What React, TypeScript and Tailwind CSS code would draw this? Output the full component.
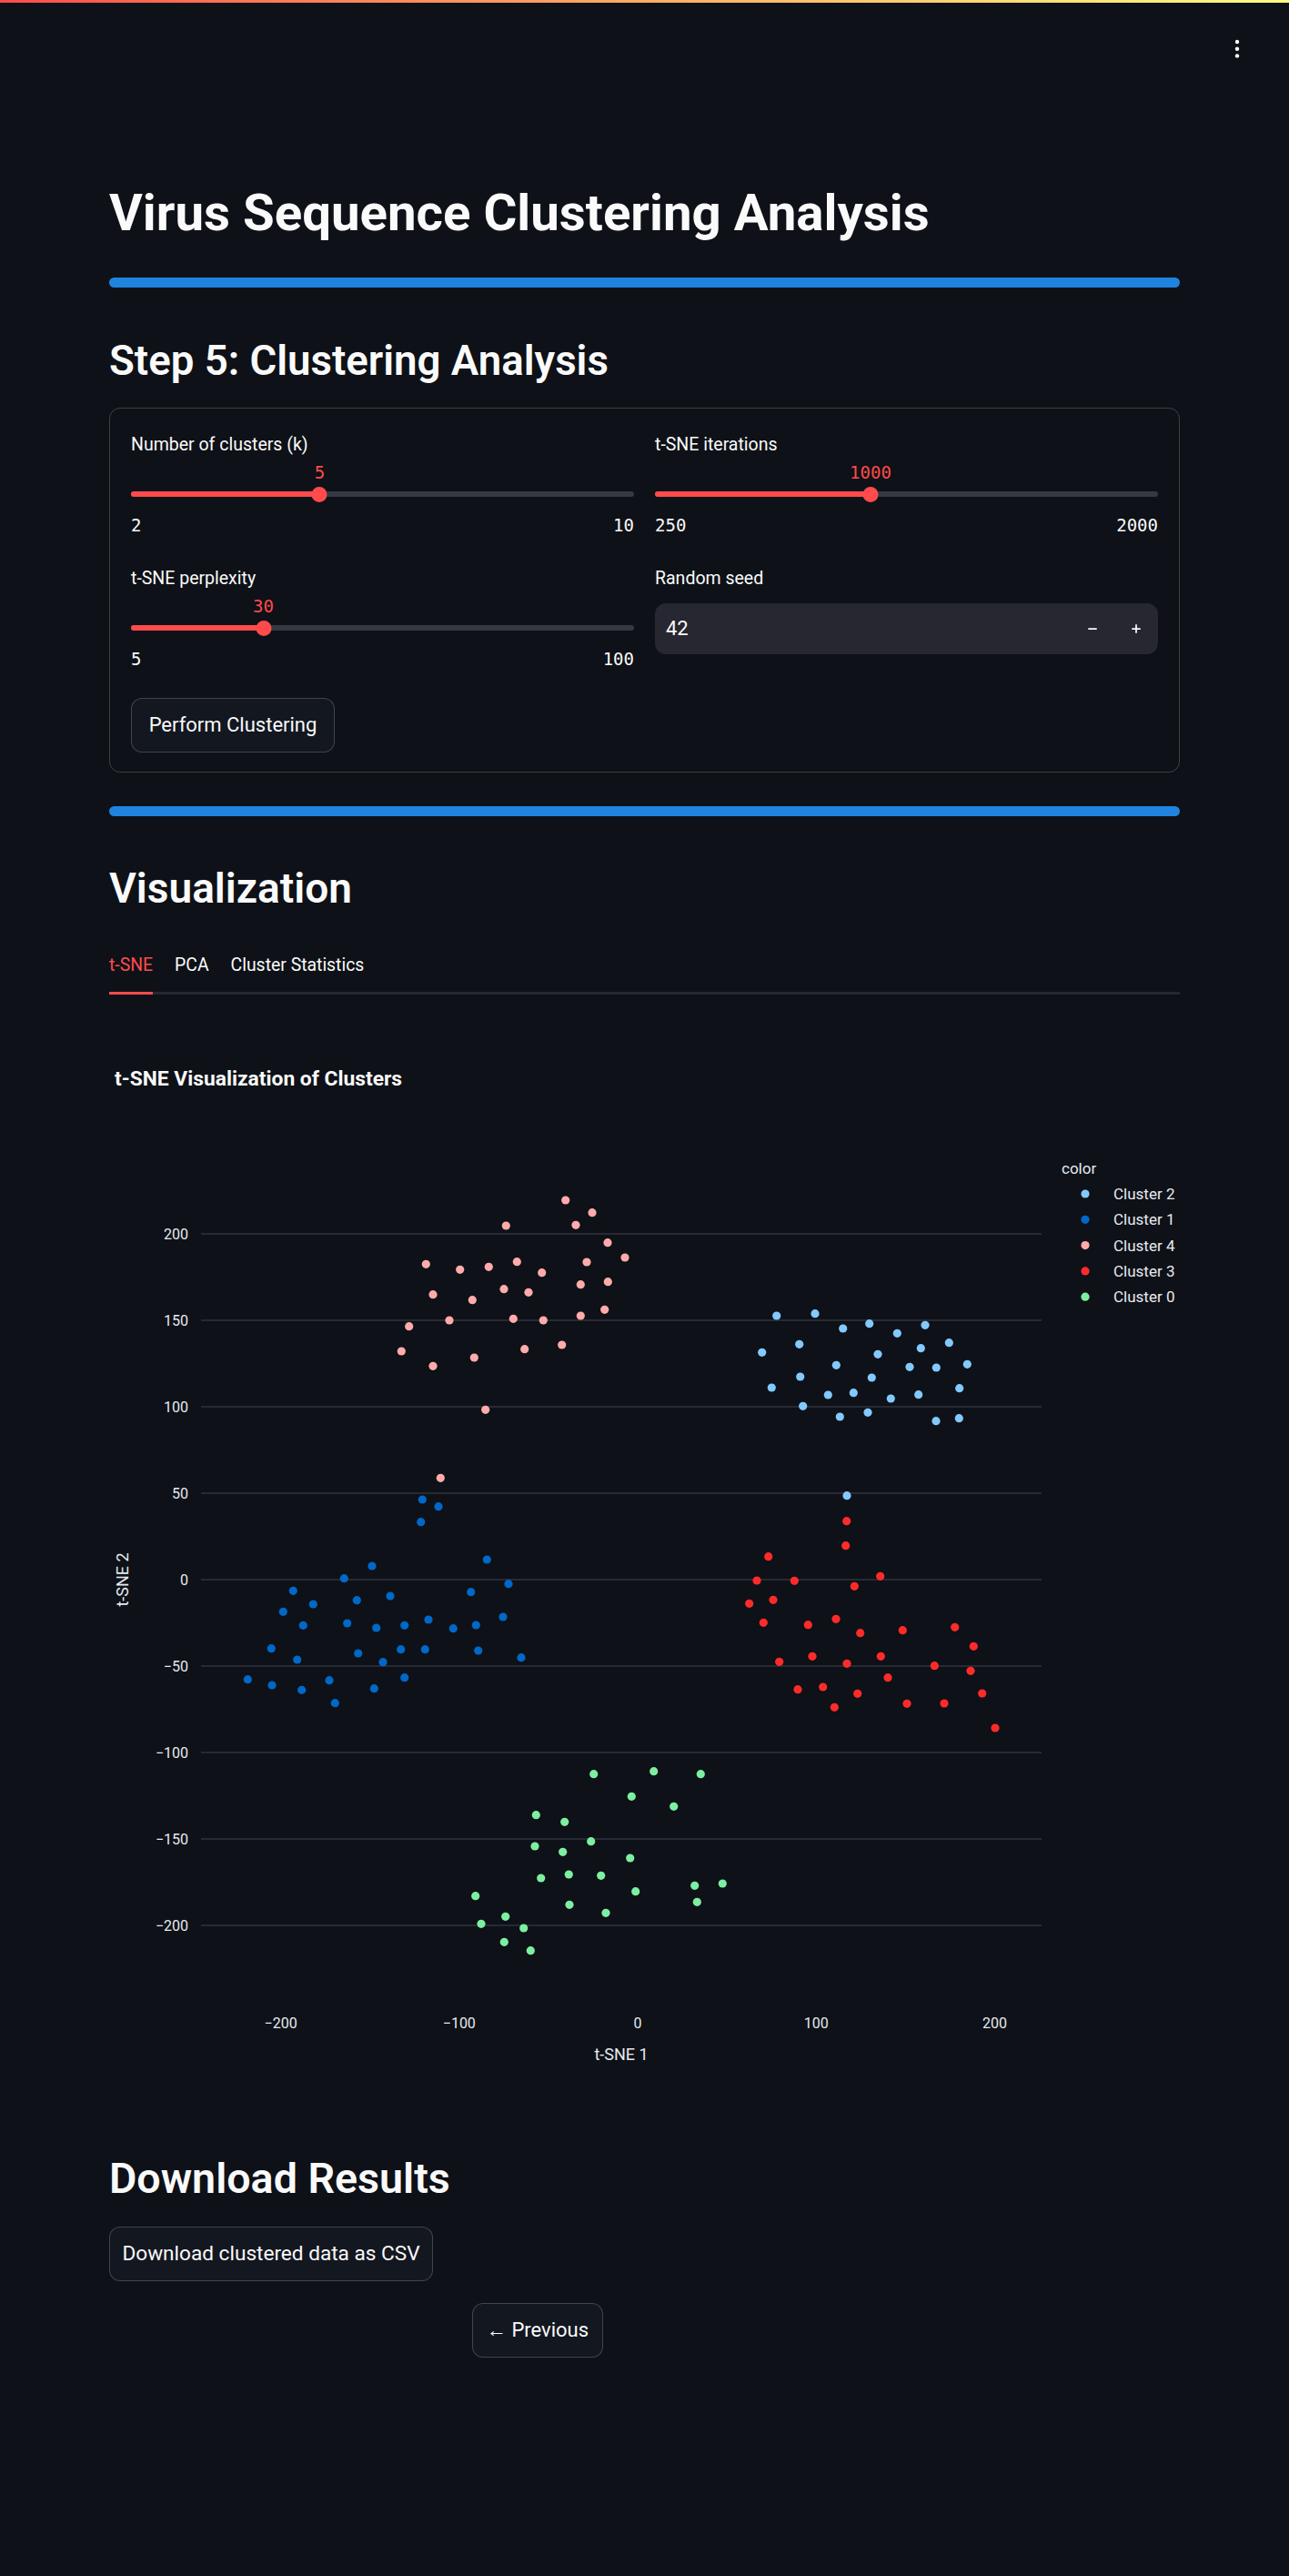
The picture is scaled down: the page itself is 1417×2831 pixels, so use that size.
import React from "react";
import { Minus, Plus } from "lucide-react";

type P = [number, number];

const C4: P[] = [[621.7,1319],[651,1332.7],[556.3,1347],[633,1346.3],[668,1365.7],[687,1382],[468.3,1389.3],[505.7,1395.3],[537.3,1392.3],[568.3,1386.7],[595.7,1398.7],[645,1387],[668.3,1408.7],[638.3,1411.7],[476,1422.7],[519.3,1428.7],[554,1416.7],[581,1420.3],[664.7,1439.3],[638.3,1446],[449.7,1457.7],[494,1451],[564.3,1449.3],[597.3,1451],[441.3,1485],[476,1501.3],[521.3,1492],[576.7,1482.7],[617.7,1478],[533.7,1549.3],[484.3,1624.3]];

const C1: P[] = [[464.3,1648],[482,1655.7],[462.7,1672.7],[535.3,1714],[409,1721],[378.3,1734.7],[322.3,1748.3],[559,1740.7],[517.7,1749.7],[344.3,1763],[392.3,1758.7],[429,1754],[311.3,1771.3],[333.3,1786.3],[381.7,1784],[413.7,1789],[444.7,1786.3],[471,1780],[498.3,1789.7],[523.3,1786],[553,1777],[298.3,1811.7],[326.7,1824],[393.7,1817],[421,1826.7],[440.7,1812.7],[467.3,1812.7],[525.7,1814],[573,1821.7],[272.3,1845.7],[299,1852],[331.7,1857.3],[362,1846.7],[411.3,1855.7],[444.7,1843.7],[368.3,1871.7]];

const C2: P[] = [[853.7,1446],[896,1443.7],[926.7,1460],[955.7,1454.7],[986.3,1465.3],[1017,1456.3],[837.7,1486.3],[878.7,1477.3],[965,1488.3],[1012.3,1481.7],[1043.3,1475.7],[919.3,1500.3],[1000,1502.3],[1029.3,1503],[1063.3,1499.3],[879.7,1513],[958.3,1514],[848.3,1525],[910.3,1533],[938.3,1530.7],[979.3,1537],[1009.7,1532.7],[1054.7,1525.7],[882.7,1545.3],[923.3,1557],[954,1552.3],[1029,1561.7],[1054.3,1558.7],[931,1643.7]];

const C3: P[] = [[930.7,1671.7],[929.7,1698.7],[844.7,1710.7],[832,1737],[873.3,1737.3],[967.7,1732.3],[939.3,1743.3],[823.7,1762.3],[850,1758.3],[839.3,1783.3],[888.3,1785.7],[919,1779.3],[945.7,1794.7],[992.3,1791.7],[1049.7,1788.3],[1070.3,1809.3],[856.7,1826.3],[893,1820.3],[931,1828.3],[968.3,1820.3],[1027.3,1830.7],[1067,1836.3],[976,1843.7],[877,1856.7],[904.7,1854],[942.7,1861.3],[1079.7,1861],[917.3,1876.3],[997,1872.3],[1038,1872],[1094,1899]];

const C0: P[] = [[652.7,1949.7],[718.7,1946.7],[770.3,1949.7],[694.3,1974.3],[740.7,1985.3],[589.3,1994.7],[620.7,2002.3],[649.7,2023.7],[588,2029],[618.7,2035.3],[692.7,2042],[594.7,2064],[625.3,2060],[660.7,2061.3],[763.7,2072.3],[794.3,2070],[522.7,2083.7],[698.7,2078.7],[766.3,2090.3],[626,2093.3],[666,2102.3],[555.7,2106.3],[529,2114.3],[575.7,2119],[554.3,2134.3],[583.3,2143.7]];

const SERIES: { name: string; color: string; pts: P[] }[] = [
  { name: "Cluster 2", color: "#83c9ff", pts: C2 },
  { name: "Cluster 1", color: "#0068c9", pts: C1 },
  { name: "Cluster 4", color: "#ffabab", pts: C4 },
  { name: "Cluster 3", color: "#ff2b2b", pts: C3 },
  { name: "Cluster 0", color: "#7defa1", pts: C0 },
];

function Slider({ label, value, min, max }: { label: string; value: number; min: number; max: number }) {
  const frac = (value - min) / (max - min);
  const pct = `${frac * 100}%`;
  return (
    <div className="flex flex-col">
      <div className="flex h-[30px] items-center text-[19.5px] leading-none">{label}</div>
      <div className="relative h-[30px]">
        <span
          className="absolute top-0 flex h-[30px] -translate-x-1/2 items-center font-['DejaVu_Sans_Mono',monospace] text-[19px] leading-none text-[#ff4b4b]"
          style={{ left: pct }}
        >
          {value}
        </span>
      </div>
      <div className="relative flex h-[18px] items-center">
        <div className="h-[6px] w-full rounded-full bg-[#363942]" />
        <div className="absolute left-0 top-[6px] h-[6px] rounded-full bg-[#ff4b4b]" style={{ width: pct }} />
        <div
          className="absolute top-[0.5px] h-[17px] w-[17px] -translate-x-1/2 rounded-full bg-[#ff4b4b]"
          style={{ left: pct }}
        />
      </div>
      <div className="mt-[10px] flex h-[30px] items-center justify-between font-['DejaVu_Sans_Mono',monospace] text-[19px] leading-none">
        <span>{min}</span>
        <span>{max}</span>
      </div>
    </div>
  );
}

function Chart() {
  const grid = Array.from({ length: 9 }, (_, i) => ({ y: 1356 + 95 * i, v: 200 - 50 * i }));
  const xt = [-200, -100, 0, 100, 200];
  const fmt = (v: number) => (v < 0 ? `\u2212${Math.abs(v)}` : `${v}`);
  return (
    <svg width={1177} height={1197} viewBox="0 0 1177 1197" className="block">
      <g transform="translate(-120,-1093)" fontFamily="Roboto, sans-serif">
        <text x={126} y={1193} fill="#fafafa" fontSize={22.8} fontWeight={700}>
          t-SNE Visualization of Clusters
        </text>
        {grid.map((g) => (
          <g key={g.y}>
            <line x1={221} x2={1145} y1={g.y} y2={g.y} stroke="#31333f" strokeWidth={1.5} />
            <text x={207} y={g.y + 5.7} textAnchor="end" fill="#e6eaf1" fontSize={16}>
              {fmt(g.v)}
            </text>
          </g>
        ))}
        {xt.map((v) => (
          <text key={v} x={701 + 1.962 * v} y={2229} textAnchor="middle" fill="#e6eaf1" fontSize={16}>
            {fmt(v)}
          </text>
        ))}
        <text x={683} y={2264} textAnchor="middle" fill="#e6eaf1" fontSize={18}>
          t-SNE 1
        </text>
        <text transform="translate(135,1736) rotate(-90)" y={6.4} textAnchor="middle" fill="#e6eaf1" fontSize={18}>
          t-SNE 2
        </text>
        {SERIES.map((s) =>
          s.pts.map((p, i) => <circle key={s.name + i} cx={p[0]} cy={p[1]} r={4.6} fill={s.color} />)
        )}
        <text x={1167} y={1290} fill="#e6eaf1" fontSize={17}>
          color
        </text>
        {SERIES.map((s, i) => {
          const y = 1312 + 28.3 * i;
          return (
            <g key={s.name}>
              <circle cx={1193} cy={y} r={4.6} fill={s.color} />
              <text x={1224} y={y + 6} fill="#e6eaf1" fontSize={17}>
                {s.name}
              </text>
            </g>
          );
        })}
      </g>
    </svg>
  );
}

export default function App() {
  return (
    <div className="relative min-h-[2831px] w-full bg-[#0e1117] font-[Roboto,sans-serif] text-[#fafafa]">
      <div className="absolute left-0 right-0 top-0 h-[3px] bg-linear-to-r from-[#ff4b4b] to-[#fffd80]" />
      <div className="absolute right-[50px] top-[38px]">
        <svg width="14" height="32" viewBox="0 0 14 32">
          <circle cx="7" cy="8" r="2.2" fill="#fafafa" />
          <circle cx="7" cy="15.7" r="2.2" fill="#fafafa" />
          <circle cx="7" cy="23.4" r="2.2" fill="#fafafa" />
        </svg>
      </div>

      <div className="mx-auto w-[1177px] pt-[194px] pb-[240px]">
        <h1 className="flex h-[80px] items-center text-[56.4px] font-bold leading-none">Virus Sequence Clustering Analysis</h1>
        <div className="mt-[31px] h-[11px] rounded-full bg-[#1f84e0]" />

        <h2 className="mt-[51px] flex h-[60px] items-center text-[45.6px] font-semibold leading-none">Step 5: Clustering Analysis</h2>

        <div className="mt-[21px] rounded-[12px] border border-[rgba(250,250,250,0.2)] px-[23px] pb-[21px] pt-[25px]">
          <div className="grid grid-cols-2 gap-x-[23px] gap-y-[29px]">
            <Slider label="Number of clusters (k)" value={5} min={2} max={10} />
            <Slider label="t-SNE iterations" value={1000} min={250} max={2000} />
            <Slider label="t-SNE perplexity" value={30} min={5} max={100} />
            <div className="flex flex-col">
              <div className="flex h-[30px] items-center text-[19.5px] leading-none">Random seed</div>
              <div className="mt-[12px] flex h-[56px] items-center rounded-[12px] bg-[#262730]">
                <span className="flex-1 pl-[12px] text-[22px] leading-none">42</span>
                <div className="flex h-full w-[48px] items-center justify-center">
                  <Minus size={14} strokeWidth={3} />
                </div>
                <div className="flex h-full w-[48px] items-center justify-center">
                  <Plus size={14} strokeWidth={3} />
                </div>
              </div>
            </div>
          </div>
          <button className="mt-[28px] flex h-[60px] w-[224px] items-center justify-center rounded-[12px] border border-[rgba(250,250,250,0.2)] bg-[#131720] text-[22px] leading-none">
            Perform Clustering
          </button>
        </div>

        <div className="mt-[37px] h-[11px] rounded-full bg-[#1f84e0]" />

        <h2 className="mt-[49px] flex h-[60px] items-center text-[46px] font-semibold leading-none">Visualization</h2>

        <div className="mt-[40px] flex gap-[24px] border-b-[3px] border-[#262730]">
          <div className="relative flex h-[44px] items-start">
            <span className="flex h-[30px] items-center text-[19.4px] leading-none text-[#ff4b4b]">t-SNE</span>
            <div className="absolute -bottom-[3px] left-0 right-0 h-[3px] bg-[#ff4b4b]" />
          </div>
          <div className="flex h-[44px] items-start">
            <span className="flex h-[30px] items-center text-[19.4px] leading-none">PCA</span>
          </div>
          <div className="flex h-[44px] items-start">
            <span className="flex h-[30px] items-center text-[19.4px] leading-none">Cluster Statistics</span>
          </div>
        </div>

        <Chart />

        <h2 className="mt-[74px] flex h-[60px] items-center text-[46.6px] font-semibold leading-none">Download Results</h2>
        <button className="mt-[23px] flex h-[60px] w-[356px] items-center justify-center rounded-[12px] border border-[rgba(250,250,250,0.2)] bg-[#131720] text-[22.6px] leading-none">
          Download clustered data as CSV
        </button>

        <div className="mt-[24px] grid grid-cols-3 gap-[20px]">
          <div />
          <div>
            <button className="flex h-[60px] w-[144px] items-center justify-center rounded-[12px] border border-[rgba(250,250,250,0.2)] bg-[#131720] text-[22px] leading-none">
              ← Previous
            </button>
          </div>
          <div />
        </div>
      </div>
    </div>
  );
}
